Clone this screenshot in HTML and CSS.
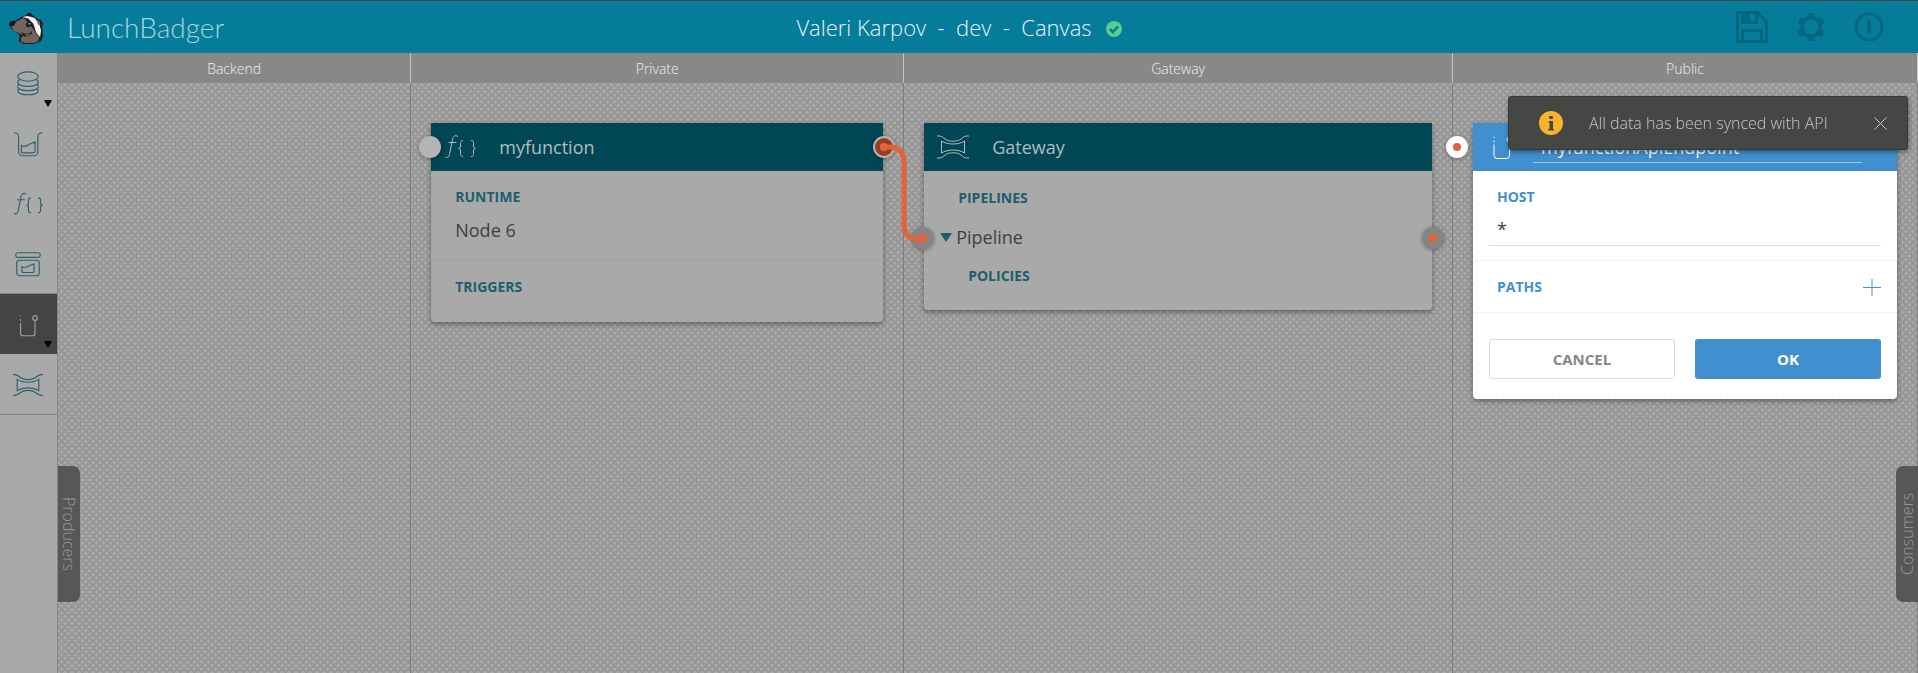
FILE: index.html
```html
<!DOCTYPE html>
<html lang="en">
<head>
<meta charset="utf-8">
<title>LunchBadger</title>
<link rel="stylesheet" href="styles.css">
</head>
<body>
<svg class="defs" aria-hidden="true">
  <symbol id="i-datasource" viewBox="0 0 32 32">
    <ellipse cx="16" cy="8" rx="11" ry="5"/>
    <path d="M5 14c1 6 21 6 22 0M5 14c0-1 .8-2 1.800-2.400M27 14c0-1-.8-2-1.800-2.400M5 18.500c1 6 21 6 22 0M5 18.500c0-1 .8-2 1.500-2.300M27 18.500c0-1-.8-2-1.500-2.300M5 23c1 6 21 6 22 0M5 23c0-1.200.8-2 1.500-2.300M27 23c0-1.200-.8-2-1.500-2.300"/>
  </symbol>
  <symbol id="i-model" viewBox="0 0 32 32">
    <path d="M1 4c4 0 5 1.500 5 5v15.500a4 4 0 0 0 4 4h12.500a4 4 0 0 0 4-4v-15.500c0-3.500 1-5 5-5M9 17.500c4 2.500 6 .5 8-1 2-1.300 4-1.500 6.500-2.500v9.500a2 2 0 0 1-2 2h-12.500z"/>
  </symbol>
  <symbol id="i-function" viewBox="0 0 32 32">
    <path d="M14 5.500c-3-2-5 0-5.500 3l-3 15c-.5 3-2 3.500-4 2.500M4.500 11.500h8M19 9.500c-2.500 0-2.500 1.500-2.500 3v2.500c0 1.500-.5 2.500-2 2.500 1.500 0 2 1 2 2.500v2.500c0 1.500 0 3 2.500 3M27 9.500c2.500 0 2.500 1.500 2.500 3v2.500c0 1.500.5 2.500 2 2.500-1.500 0-2 1-2 2.500v2.500c0 1.500 0 3-2.500 3"/>
  </symbol>
  <symbol id="i-endpoint" viewBox="0 0 32 32">
    <rect x="3" y="4" width="26" height="5" rx="2"/>
    <rect x="4" y="12" width="24" height="16.500" rx="3"/>
    <path d="M9.500 19c4 2 6 0 8-1.500l5-1.500v7.500a1.500 1.500 0 0 1-1.500 1.500h-10a1.500 1.500 0 0 1-1.500-1.500z"/>
  </symbol>
  <symbol id="i-apiendpoint" viewBox="0 0 32 32">
    <path d="M8 6v1M8 9.500v2M8 13.500v11a3 3 0 0 0 3 3h9.500a3 3 0 0 0 3-3v-13.500"/>
    <circle cx="23.500" cy="8.500" r="2.500"/>
  </symbol>
  <symbol id="i-gateway" viewBox="0 0 32 32">
    <path d="M0 5c4-.5 6 1 8 3 4 3 12 3 16 0 2-2 4-3.500 8-3M0 27c4 .5 6-1 8-3 4-3 12-3 16 0 2 2 4 3.500 8 3M4.500 10c6 4 17 4 23 0v12c-6-4-17-4-23 0z"/>
  </symbol>
</svg>

<header class="topbar">
  <a class="brand" href="#">
    <svg class="badger" viewBox="0 0 36 34" aria-hidden="true">
      <path d="M1 9l5-1 7-4 5-2 1-2h3l2 2 5 4 3 1 3 3-1 4 1 10-2 5-8 3H15l-5-3 1-6-4-4-5-3-2-4z" fill="#211c1f"/>
      <path d="M3 9l4 0 8-4 6 6 4 9 2 10-2 1H16l-4-2 1-5 3 0-5-3-6-3-3-4z" fill="#71665d"/>
      <path d="M14 4l5-1 7 2 5 5 2 8-1 7-4-5-3-9-5-5z" fill="#f4f4f4"/>
      <path d="M28 7l4 2 0 4-2-1z" fill="#71665d"/>
      <path d="M22 13l4 5 5 7-1 4-5 2-6 0z" fill="#71665d"/>
      <path d="M1 9l5-1 1 2-3 4-3-1z" fill="#181417"/>
      <path d="M12 19q5 4 10 1l2-2-1 4q-3 3-8 2z" fill="#211c1f"/>
      <path d="M16 22q3 1 6-1l-1 2q-2 1-4 0z" fill="#d96c62"/>
      <circle cx="20" cy="12" r="2.600" fill="#201e25"/>
      <circle cx="21" cy="11" r="1" fill="#7d9bb5"/>
    </svg>
    <span class="wordmark">LunchBadger</span>
  </a>
  <h1 class="project">Valeri Karpov&nbsp; -&nbsp; dev&nbsp; -&nbsp; Canvas
    <svg class="ok" viewBox="0 0 16 16" aria-hidden="true"><circle cx="8" cy="8" r="8"/><path d="M4 8l3 3 5-5.500"/></svg>
  </h1>
  <nav class="actions">
    <button aria-label="Save"><svg viewBox="0 0 32 32"><path d="M1.500 1.500h20l9 9v20h-29z" /><path d="M6.500 1.500h14v10h-14zM6.500 30.500v-11h19v11"/><path class="solid" d="M6 1h8v11h-8z"/></svg></button>
    <button aria-label="Settings"><svg viewBox="0 0 32 32"><path class="solid" fill-rule="evenodd" d="M13 0h6l1 4 4 2 4-1 3 6-3 3v4l3 3-3 6-4-1-4 2-1 4h-6l-1-4-4-2-4 1-3-6 3-3v-4l-3-3 3-6 4 1 4-2zM16 7.500a8.500 8.500 0 1 0 0 17a8.500 8.500 0 1 0 0-17z"/></svg></button>
    <button aria-label="Log out"><svg viewBox="0 0 32 32"><circle cx="16" cy="16" r="14"/><path class="bar" d="M16 9v14"/></svg></button>
  </nav>
</header>

<div class="workspace">
  <aside class="palette">
    <button aria-label="Data source"><svg class="icon"><use href="#i-datasource"/></svg><i class="more"></i></button>
    <button aria-label="Model"><svg class="icon"><use href="#i-model"/></svg></button>
    <button aria-label="Function"><svg class="icon"><use href="#i-function"/></svg></button>
    <button aria-label="Service endpoint"><svg class="icon"><use href="#i-endpoint"/></svg></button>
    <button class="active" aria-label="API endpoint"><svg class="icon"><use href="#i-apiendpoint"/></svg><i class="more"></i></button>
    <button aria-label="Gateway"><svg class="icon"><use href="#i-gateway"/></svg></button>
  </aside>

  <main class="canvas">
    <section class="quadrant backend"><h2>Backend</h2></section>

    <section class="quadrant private">
      <h2>Private</h2>
      <div class="lane">
        <article class="card">
          <header class="card-head">
            <svg class="icon"><use href="#i-function"/></svg>
            <h3>myfunction</h3>
            <i class="port left plain"></i><i class="port right linked"></i>
          </header>
          <div class="block first"><h4>RUNTIME</h4><p>Node 6</p></div>
          <div class="block last"><h4>TRIGGERS</h4></div>
        </article>
      </div>
    </section>

    <section class="quadrant gateway">
      <h2>Gateway</h2>
      <div class="lane">
        <article class="card">
          <header class="card-head">
            <svg class="icon"><use href="#i-gateway"/></svg>
            <h3>Gateway</h3>
          </header>
          <div class="pipelines">
            <h4>PIPELINES</h4>
            <div class="pipeline"><i class="caret"></i>Pipeline<i class="port left dark"></i><i class="port right dark"></i></div>
            <h4 class="policies">POLICIES</h4>
          </div>
          <svg class="wire" viewBox="0 0 60 112" aria-hidden="true"><path d="M9 10h6q14 1 14 15v63q0 14 14 14h5"/><circle cx="9" cy="10" r="4"/><circle cx="48" cy="102" r="4"/></svg>
        </article>
      </div>
    </section>

    <section class="quadrant public">
      <h2>Public</h2>
      <div class="lane">
        <form class="card editing">
          <header class="card-head">
            <svg class="icon"><use href="#i-apiendpoint"/></svg>
            <input class="name" aria-label="Name" value="myfunctionApiEndpoint">
            <i class="port outside white"></i>
          </header>
          <div class="block host"><label for="host">HOST</label><input id="host" value="*"></div>
          <div class="block paths"><h4>PATHS</h4>
            <button class="add" type="button" aria-label="Add path"><svg viewBox="0 0 18 18"><path d="M9 1v17M0 9.500h18"/></svg></button></div>
          <div class="buttons"><button type="button" class="cancel">CANCEL</button><button type="button" class="submit">OK</button></div>
        </form>
      </div>
    </section>

    <button class="drawer producers">Producers</button>
    <button class="drawer consumers">Consumers</button>
  </main>
</div>

<div class="toast" role="status">
  <svg class="info" viewBox="0 0 24 24" aria-hidden="true"><circle cx="12" cy="12" r="12"/><path d="M10 10h4v8h1v1.500h-6v-1.500h1.500v-6.500h-1.500zM10.200 5h3.600v3h-3.600z"/></svg>
  <span>All data has been synced with API</span>
  <button aria-label="Close"><svg viewBox="0 0 13 13"><path d="M.5.5l12 12M12.500.5l-12 12"/></svg></button>
</div>
</body>
</html>
```
FILE: styles.css
```css
* { box-sizing: border-box; }
body {
  margin: 0;
  min-height: 100vh;
  display: flex;
  flex-direction: column;
  font-family: "Open Sans", "Noto Sans", sans-serif;
  font-size: 18px;
  color: #404040;
  background: #a9a9a9;
}
h1, h2, h3, h4, p { margin: 0; font-weight: 400; }
button, input { font: inherit; border: 0; background: none; padding: 0; outline: 0; }
.defs { position: absolute; width: 0; height: 0; }
.icon { width: 32px; height: 32px; flex: none; fill: none; stroke: currentColor; stroke-width: 1.2; overflow: visible; }

.topbar {
  display: grid;
  grid-template-columns: 1fr auto 1fr;
  align-items: center;
  height: 53px;
  border-top: 1px solid #444;
  background: #047c9a;
}
.brand { display: flex; align-items: center; gap: 23px; padding-left: 9px; text-decoration: none; color: #a9d3df; }
.badger { width: 35px; height: 33px; margin-top: 4px; }
.wordmark { font-family: Lato, sans-serif; font-weight: 300; font-size: 28px; line-height: 36px; }
.project { display: flex; align-items: center; gap: 14px; color: #e8f4f7; font-size: 22px; font-weight: 300; line-height: 32px; }
.ok { width: 16px; height: 16px; fill: #56cb94; margin-top: 4px; }
.ok path { fill: none; stroke: #047c9a; stroke-width: 2.5; }
.actions { display: flex; justify-content: flex-end; align-items: center; gap: 29px; padding-right: 34px; }
.actions button { height: 32px; }
.actions svg { display: block; width: 32px; height: 32px; fill: none; stroke: #03667f; stroke-width: 3; }
.actions button:nth-child(2) svg { width: 28px; height: 28px; }
.actions button:nth-child(3) svg { width: 30px; height: 30px; }
.actions .solid { fill: #03667f; stroke: none; }
.actions .bar { stroke-width: 4; }

.workspace { flex: 1; display: flex; }
.palette { width: 58px; flex: none; border-right: 1px solid #858585; background: #a9a9a9; }
.palette button {
  position: relative;
  display: flex;
  align-items: center;
  justify-content: center;
  width: 100%;
  height: 60px;
  padding: 1px 2px 0 0;
  color: #2d5f6c;
}
.palette .icon { width: 30px; height: 30px; }
.palette .active { height: 61px; background: #444; color: #a0a0a0; border-top: 1px solid #858585; }
.palette button:last-child { height: 61px; border-bottom: 1px solid #858585; }
.more { position: absolute; right: 5px; bottom: 6px; border: 4px solid transparent; border-top: 7px solid #000; border-bottom: 0; }

.canvas {
  position: relative;
  flex: 1;
  display: flex;
  background-color: #a9a9a9;
  background-image:
    linear-gradient(45deg, #979797 8%, transparent 8% 42%, #979797 42% 58%, transparent 58% 92%, #979797 92%),
    linear-gradient(-45deg, #979797 8%, transparent 8% 42%, #979797 42% 58%, transparent 58% 92%, #979797 92%);
  background-size: 7px 7px;
}
.quadrant { min-width: 0; flex-basis: 0; border-right: 1px solid #7c7c7c; }
.backend { flex-grow: 353; }
.private { flex-grow: 493; }
.gateway { flex-grow: 549; }
.public { flex-grow: 465; }
.quadrant h2 {
  height: 30px;
  margin-right: -1px;
  border-right: 1px solid #c4c4c4;
  background: #888;
  color: #f0f0f0;
  font-size: 14px;
  font-weight: 300;
  line-height: 32px;
  text-align: center;
}
.lane { padding: 40px 20px; }

.card { position: relative; border-radius: 4px; background: #a9a9a9; box-shadow: 0 2px 5px #0006; }
.card-head {
  position: relative;
  display: flex;
  align-items: center;
  gap: 23px;
  height: 48px;
  padding-left: 13px;
  background: #014654;
  color: #b0bcbf;
}
.card-head .icon { stroke-width: 1; }
.card-head h3 { font-size: 18px; line-height: 24px; }
h4, .block label { color: #1c5e6e; font-size: 14px; font-weight: 700; line-height: 20px; }
.block { padding: 16px 24px 18px; border-bottom: 1px solid #a1a1a1; }
.block p { margin-top: 11px; line-height: 24px; }
.block.last { padding-bottom: 25px; border: 0; }

.pipelines { padding: 17px 0 24px 34px; }
.pipeline { position: relative; display: flex; align-items: center; gap: 4px; height: 38px; margin: 10px 0 0 -18px; }
.caret { border: 6px solid transparent; border-top: 9px solid #1c5e6e; border-bottom: 0; }
.pipeline .port { margin-top: -10px; }
.pipeline .port.left { left: -28px; }
.policies { margin: 10px 0 0 10px; }

.port { position: absolute; top: 50%; width: 22px; height: 22px; margin-top: -11px; border-radius: 50%; display: grid; place-items: center; box-shadow: 0 1px 4px #0005; }
.port::after { content: ""; width: 8px; height: 8px; border-radius: 50%; background: #e2623a; }
.port.left { left: -12px; }
.port.right { right: -12px; }
.port.outside { left: -27px; }
.plain { background: #b4b4b4; }
.plain::after { display: none; }
.linked { background: #963e24; border: 2px solid #b4b4b4; }
.dark { background: #858585; }
.white { background: #fff; }
.wire { position: absolute; z-index: 1; left: -49px; top: 14px; width: 60px; height: 112px; fill: #e2623a; }
.wire path { fill: none; stroke: #e2623a; stroke-width: 5; }

.editing { background: #fff; }
.editing .card-head { background: #418fce; color: #fff; gap: 15px; }
.name { flex: 1; min-width: 0; height: 32px; margin-right: 35px; padding: 0 8px; border-bottom: 1px solid #a0c7e6; color: #fff; }
.editing h4, .editing label { color: #418fce; }
.editing .block { padding: 16px 16px 14px; border-color: #f3f3f3; }
.editing label, .editing h4 { padding-left: 8px; }
.host label { display: block; }
.host input { display: block; width: 100%; height: 34px; margin-top: 5px; padding: 0 8px; border-bottom: 1px solid #dcdcdc; color: #404040; }
.editing .paths { display: flex; align-items: center; justify-content: space-between; padding-bottom: 15px; }
.add svg { display: block; width: 18px; height: 18px; stroke: #418fce; stroke-width: 1; }
.buttons { display: grid; grid-template-columns: 1fr 1fr; gap: 20px; padding: 26px 16px 20px; }
.buttons button { height: 40px; border-radius: 3px; font-size: 15px; font-weight: 700; }
.cancel { border: 1px solid #dcdcdc; color: #8a8486; }
.submit { background: #418fce; color: #fff; }

.drawer { position: absolute; top: 413px; width: 22px; height: 136px; background: #575757; color: #9b9b9b; font-size: 16px; font-weight: 300; line-height: 22px; writing-mode: vertical-rl; }
.producers { left: 0; border-radius: 0 7px 7px 0; }
.consumers { right: 0; border-radius: 0 7px 7px 0; transform: rotate(180deg); }

.toast { position: fixed; top: 96px; right: 10px; z-index: 2; display: flex; align-items: center; width: 400px; height: 54px; padding: 0 20px 0 30px; border: 1px solid #383a38; border-radius: 3px; background: #454745; color: #c8c8c8; font-size: 16px; font-weight: 300; box-shadow: 1px 2px 5px #0006; }
.info { width: 24px; height: 24px; margin-right: 26px; fill: #fab32c; }
.info path { fill: #454745; }
.toast button { margin-left: auto; }
.toast button svg { display: block; width: 13px; height: 13px; stroke: #c8c8c8; stroke-width: 1; }
```
